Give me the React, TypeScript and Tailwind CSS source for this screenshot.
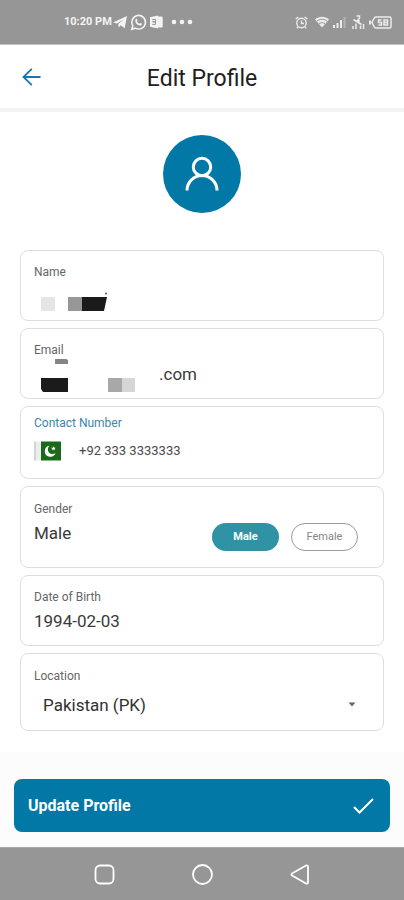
import { useState } from "react";
import type { ReactNode } from "react";

interface FieldProps {
  id: string;
  label: string;
  className?: string;
  labelClassName?: string;
  children: ReactNode;
}

const valueClass = "block w-full bg-transparent text-[17px] leading-6 text-[#3a3a3a] outline-none";

function Field({ id, label, className = "h-[71px] pt-[13px]", labelClassName = "text-[#666666]", children }: FieldProps) {
  return (
    <div className={`relative rounded-lg border border-[#dedede] px-[13px] ${className}`}>
      <label htmlFor={id} className={`block text-xs leading-4 ${labelClassName}`}>
        {label}
      </label>
      {children}
    </div>
  );
}

function StatusBar() {
  return (
    <div className="flex h-[45px] items-center justify-between border-b border-[#c4c4c4] bg-[#969696] pr-3 pl-16 text-[#f4f4f4]">
      <div className="flex items-center">
        <span className="text-[11px] leading-4 font-bold">10:20 PM</span>
        <svg width="14" height="14" viewBox="0 0 14 14" className="ml-px" fill="currentColor">
          <path d="M0 7.4 14 1l-2.3 12.2-4-2.9-2 2.2-.5-3.4L11 4.2 4 8.6z" />
        </svg>
        <svg width="17" height="17" viewBox="0 0 24 24" className="ml-[3px]" fill="none" stroke="currentColor" strokeWidth="2.2">
          <path d="M2.5 21.5 4 16.5a9.6 9.6 0 1 1 3.6 3.5z" />
          <path d="M8.3 7.2c.8-.6 1.5-.4 1.8.5l.5 1.4-.9 1.3c.8 1.7 2 2.8 3.7 3.5l1.3-1.1 2.2 1.1c.1 1.8-1.6 2.8-3.2 2.4-3.5-.9-5.7-3.2-6.3-6.2-.2-1.1.1-2.2.9-2.9z" fill="currentColor" stroke="none" />
        </svg>
        <svg width="13" height="14" viewBox="0 0 13 14" className="ml-[3px]">
          <path d="M7 1.5h4.5a1.2 1.2 0 0 1 1.2 1.2v8.6a1.2 1.2 0 0 1-1.2 1.2H7z" fill="currentColor" />
          <path d="M0 2.3 8 .5v13L0 11.7z" fill="currentColor" />
          <path d="M2.2 4.5h3.3v2.3H2.4h3.1v2.6H2.2" fill="none" stroke="#969696" />
        </svg>
        <svg width="22" height="6" viewBox="0 0 22 6" className="ml-2" fill="currentColor">
          <circle cx="3" cy="3" r="2.3" />
          <circle cx="11" cy="3" r="2.3" />
          <circle cx="19" cy="3" r="2.3" />
        </svg>
      </div>
      <div className="flex items-center text-[#ececec]">
        <svg width="13" height="13" viewBox="0 0 13 13" fill="none" stroke="currentColor" strokeWidth="1.4">
          <circle cx="6.5" cy="7" r="4.7" />
          <path d="M6.5 4.5v3H9M.7 3 3.3 1M12.3 3 9.700 1M3 11l-1.200 1.300M10 11l1.200 1.300" />
        </svg>
        <svg width="14" height="12" viewBox="0 0 14 12" className="ml-[7px]">
          <path d="M7 11.5 0 3.5C4-.2 10-.2 14 3.5z" fill="currentColor" />
          <path d="M1.8 5.2c3-2.6 7.4-2.6 10.4 0M4 7.7c1.800-1.400 4.200-1.400 6 0" fill="none" stroke="#969696" />
        </svg>
        <svg width="14" height="12" viewBox="0 0 14 12" className="ml-1" fill="currentColor">
          <path d="M0 9h2v3H0zM3.5 7h2v5h-2zM7 4h2v8H7z" />
          <path d="M10.5 1h2v11h-2z" opacity=".35" />
        </svg>
        <svg width="13" height="14" viewBox="0 0 13 14" className="ml-[5px]" fill="none" stroke="currentColor" strokeWidth="1.5">
          <path d="M4.500 1h3v2.200L5 6h3M1 11v3M4 8.500V14M8.500 10.500V14M11.500 9v5M1.500 4.500l8 5" />
        </svg>
        <svg width="23" height="13" viewBox="0 0 23 13" className="ml-1" fill="none" stroke="currentColor" strokeWidth="1.5">
          <path d="M0 4.5h2v4H0z" fill="currentColor" stroke="none" />
          <path d="M3 6.500 5 2.500Q5.500 1 7 1h13.500Q22 1 22 2.500v8Q22 12 20.500 12H7q-1.500 0-2-1.500z" />
          <path d="M12.5 4h-3v2.500h3V9h-3M15 4h3.500v5H15zM15 6.500h3.500" />
        </svg>
      </div>
    </div>
  );
}

function Header() {
  return (
    <header className="grid h-[67px] grid-cols-[64px_1fr_64px] items-center border-b-4 border-[#f4f4f4] bg-white">
      <button type="button" aria-label="Back" className="flex h-full items-center pl-[22px] text-[#1677a8]">
        <svg width="19" height="18" viewBox="0 0 19 18" fill="none" stroke="currentColor" strokeWidth="1.8">
          <path d="M18.5 9h-17M9.8.8 1.5 9l8.300 8.200" />
        </svg>
      </button>
      <h1 className="pt-1 text-center text-[23px] leading-7 text-[#202020]">Edit Profile</h1>
    </header>
  );
}

function PakistanFlag() {
  return (
    <svg width="27" height="20" viewBox="0 0 27 20" role="img" aria-label="Pakistan">
      <path d="M0 .5h7v19H0z" fill="#ededed" />
      <path d="M0 .5h2v19H0z" fill="#d6d6d6" />
      <path d="M7 .5h20v19H7z" fill="#1b6a1b" />
      <path d="M21.500 12A5.500 5.500 0 1 1 15.500 4.800 4.600 4.600 0 1 0 21.500 12z" fill="#fff" />
      <path d="m19.500 5 .6 1.700 1.800.1-1.400 1.100.5 1.700-1.500-1-1.500 1 .5-1.700L17 6.800l1.900-.1z" fill="#fff" />
    </svg>
  );
}

export default function App() {
  const [name, setName] = useState("");
  const [email, setEmail] = useState(".com");
  const [phone, setPhone] = useState("+92 333 3333333");
  const [gender, setGender] = useState("Male");
  const [birthDate, setBirthDate] = useState("1994-02-03");
  const [country, setCountry] = useState("PK");

  return (
    <div className="flex min-h-screen flex-col bg-white font-[Roboto,sans-serif]">
      <StatusBar />
      <Header />
      <form className="flex grow flex-col" onSubmit={e => e.preventDefault()}>
        <div className="flex justify-center pt-[23px] pb-[37px]">
          <div className="flex size-[78px] items-center justify-center rounded-full bg-[#0278a6] text-white">
            <svg width="34" height="36" viewBox="0 0 34 36" fill="none" stroke="currentColor" strokeWidth="3">
              <circle cx="17" cy="11" r="8.7" />
              <path d="M2 34.500a15 15 0 0 1 30 0" />
            </svg>
          </div>
        </div>

        <div className="flex flex-col gap-[7px] px-5">
          <Field id="name" label="Name">
            <input id="name" value={name} onChange={e => setName(e.target.value)} className={`${valueClass} mt-2`} />
            <svg width="68" height="20" viewBox="0 0 68 20" className="absolute top-[41px] left-5" aria-hidden="true">
              <path d="M0 5h14v14H0z" fill="#e5e5e5" />
              <path d="M27 5h14v14H27z" fill="#979797" />
              <path d="M41 5h25l-3 14H41z" fill="#1b1b1b" />
              <circle cx="65" cy="1.5" r="1" fill="#555" />
            </svg>
          </Field>

          <Field id="email" label="Email">
            <input id="email" value={email} onChange={e => setEmail(e.target.value)} className={`${valueClass} mt-1 pl-[125px]`} />
            <svg width="95" height="33" viewBox="0 0 95 33" className="absolute top-[30px] left-5" aria-hidden="true">
              <path d="M14 0h11l2 1v4H14z" fill="#858585" />
              <path d="M0 19h27v14H2l-2-3z" fill="#1b1b1b" />
              <path d="M67 19h14v14H67z" fill="#a8a8a8" />
              <path d="M81 19h13v14H81z" fill="#d6d6d6" />
            </svg>
          </Field>

          <Field id="phone" label="Contact Number" className="h-[73px] pt-2" labelClassName="text-[#3a86b0]">
            <div className="mt-2 flex items-center gap-[18px]">
              <PakistanFlag />
              <input
                id="phone"
                type="tel"
                value={phone}
                onChange={e => setPhone(e.target.value)}
                className="min-w-0 grow bg-transparent text-[13px] leading-6 text-[#4a4a4a] outline-none"
              />
            </div>
          </Field>

          <Field id="gender" label="Gender" className="h-[82px] pt-[14px]">
            <div className="flex items-start justify-between pr-3">
              <output id="gender" className="mt-1 text-[17px] leading-6 text-[#3a3a3a]">{gender}</output>
              <div className="mt-[6px] flex gap-3">
                {["Male", "Female"].map(item => (
                  <button
                    key={item}
                    type="button"
                    aria-pressed={gender === item}
                    onClick={() => setGender(item)}
                    className={
                      gender === item
                        ? "h-7 w-[67px] rounded-full bg-[#3093a5] text-[11px] font-bold text-white"
                        : "h-7 w-[67px] rounded-full border border-[#9b9b9b] text-[11px] text-[#868686]"
                    }
                  >
                    {item}
                  </button>
                ))}
              </div>
            </div>
          </Field>

          <Field id="birthDate" label="Date of Birth">
            <input id="birthDate" value={birthDate} onChange={e => setBirthDate(e.target.value)} className={`${valueClass} mt-1`} />
          </Field>

          <Field id="country" label="Location" className="h-[78px] pt-[14px]">
            <div className="relative mt-[9px]">
              <select
                id="country"
                value={country}
                onChange={e => setCountry(e.target.value)}
                className="block w-full appearance-none bg-transparent pl-[9px] text-[17px] leading-6 text-[#303030] outline-none"
              >
                <option value="PK">Pakistan (PK)</option>
              </select>
              <svg width="8" height="5" viewBox="0 0 8 5" className="pointer-events-none absolute top-[9px] right-[14px]">
                <path d="M.5.5h7L4 4.500z" fill="#666" />
              </svg>
            </div>
          </Field>
        </div>

        <div className="mt-auto bg-[#fcfcfc] px-[14px] pt-[27px] pb-[15px]">
          <button
            type="submit"
            className="flex h-[53px] w-full items-center justify-between rounded-lg bg-[#0278a6] pr-4 pl-[14px] text-base font-bold text-white"
          >
            Update Profile
            <svg width="21" height="16" viewBox="0 0 21 16" fill="none" stroke="currentColor" strokeWidth="2">
              <path d="m1 9 5.500 5.500L20 1" />
            </svg>
          </button>
        </div>
      </form>

      <nav className="flex h-[53px] items-center justify-center gap-[77px] border-t border-[#a6a6a6] bg-[#969696] text-white">
        <button type="button" aria-label="Recent apps">
          <svg width="21" height="21" viewBox="0 0 21 21" fill="none" stroke="currentColor" strokeWidth="1.8">
            <rect x="1.5" y="1.5" width="18" height="18" rx="4.5" />
          </svg>
        </button>
        <button type="button" aria-label="Home">
          <svg width="21" height="21" viewBox="0 0 21 21" fill="none" stroke="currentColor" strokeWidth="1.8">
            <circle cx="10.5" cy="10.5" r="9.500" />
          </svg>
        </button>
        <button type="button" aria-label="Back to previous app">
          <svg width="21" height="21" viewBox="0 0 21 21" fill="none" stroke="currentColor" strokeWidth="1.8" strokeLinejoin="round">
            <path d="M2 9.500 16 1.500q2-.7 2 1.200v15.600q0 1.900-2 1.200L2 11.500q-1-1 0-2z" />
          </svg>
        </button>
      </nav>
    </div>
  );
}
